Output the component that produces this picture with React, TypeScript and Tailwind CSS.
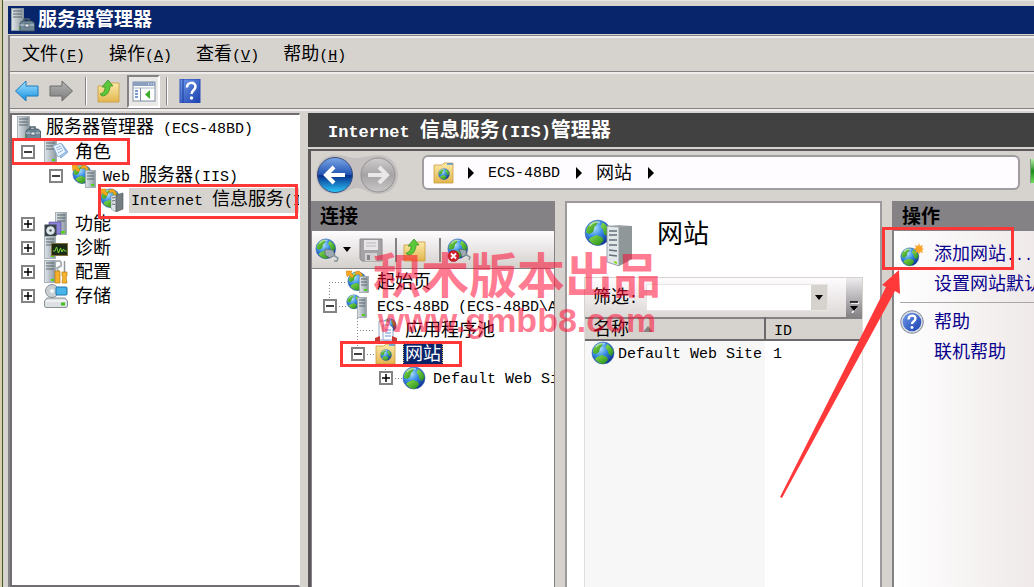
import React from 'react';

interface TextProps {
  children: string;
  latin?: string;
}

// Latin runs sit in a half-width mono face beside full-width Chinese glyphs
const MixedText: React.FC<TextProps> = ({ children, latin = 'text-[15px]' }) => (
  <>
    {children.split(/([\x20-\x7e]+)/).filter(Boolean).map((part, i) =>
      /^[\x20-\x7e]+$/.test(part) ? (
        <span key={i} className={`font-['Liberation_Mono',monospace] ${latin}`}>{part}</span>
      ) : (
        part
      )
    )}
  </>
);

const Defs = () => (
  <svg className="absolute h-0 w-0" aria-hidden="true">
    <defs>
      <radialGradient id="sea" cx="0.35" cy="0.3" r="0.75">
        <stop offset="0" stopColor="#b5e4ff" />
        <stop offset="0.45" stopColor="#3a8ee6" />
        <stop offset="1" stopColor="#0d2f8c" />
      </radialGradient>
      <linearGradient id="land" x1="0" y1="0" x2="1" y2="1">
        <stop offset="0" stopColor="#8fe04a" />
        <stop offset="1" stopColor="#1f8a1c" />
      </linearGradient>
      <linearGradient id="tower" x1="0" y1="0" x2="1" y2="0">
        <stop offset="0" stopColor="#dfe6ea" />
        <stop offset="1" stopColor="#8b979e" />
      </linearGradient>
      <linearGradient id="folder" x1="0" y1="0" x2="0" y2="1">
        <stop offset="0" stopColor="#fbeaa8" />
        <stop offset="1" stopColor="#e3b64f" />
      </linearGradient>
      <linearGradient id="blueArrow" x1="0" y1="0" x2="0" y2="1">
        <stop offset="0" stopColor="#a4e2ff" />
        <stop offset="1" stopColor="#1290e0" />
      </linearGradient>
      <linearGradient id="grayArrow" x1="0" y1="0" x2="0" y2="1">
        <stop offset="0" stopColor="#b4b4b4" />
        <stop offset="1" stopColor="#7c7c7c" />
      </linearGradient>
      <linearGradient id="navBlue" x1="0" y1="0" x2="0" y2="1">
        <stop offset="0" stopColor="#7ba6e6" />
        <stop offset="0.48" stopColor="#2456b4" />
        <stop offset="0.52" stopColor="#07308c" />
        <stop offset="1" stopColor="#2cc8fa" />
      </linearGradient>
      <linearGradient id="navGray" x1="0" y1="0" x2="0" y2="1">
        <stop offset="0" stopColor="#cfcdcd" />
        <stop offset="0.5" stopColor="#a5a3a4" />
        <stop offset="1" stopColor="#c9c6c6" />
      </linearGradient>
      <linearGradient id="helpBlue" x1="0" y1="0" x2="1" y2="1">
        <stop offset="0" stopColor="#6f9bea" />
        <stop offset="1" stopColor="#1a3fae" />
      </linearGradient>
    </defs>
  </svg>
);

const Globe = ({ x = 0, y = 0, s = 1 }: { x?: number; y?: number; s?: number }) => (
  <g transform={`translate(${x} ${y}) scale(${s})`}>
    <circle cx="12" cy="12" r="11" fill="url(#sea)" stroke="#3563b5" strokeWidth="0.6" />
    <path d="M3 7C6 3 9 1.500 12 2l-1 3-2 2-1 4-3 2-3-1c0-2 0-3 1-5Z" fill="url(#land)" />
    <path d="M6 16l5-2 5 2 1 3-4 4c-4 0-7-2-9-5Z" fill="url(#land)" />
    <path d="M16 3c4 2 6 5 6.500 8l-2 4-3-2-1-4-2-2Z" fill="url(#land)" />
    <path d="M5 6c2-3 6-4 9-3" fill="none" stroke="#fff" strokeOpacity="0.5" strokeWidth="1.500" />
  </g>
);

const Tower = ({ x = 0, y = 0, w = 12, h = 23 }: { x?: number; y?: number; w?: number; h?: number }) => (
  <g transform={`translate(${x} ${y})`}>
    <rect x="0.500" y="0.500" width={w - 1} height={h - 1} fill="url(#tower)" stroke="#98a5ac" strokeWidth="0.8" />
    <path d={`M2 3h${w - 4}M2 6h${w - 4}M2 9h${w - 4}`} stroke="#5b666d" strokeWidth="1" />
    <rect x={w - 5} y={h - 4} width="3" height="2" fill="#4fd414" />
  </g>
);

const OrangeArrows = () => (
  <path
    d="M0 1h6L5 3l3 3-2 2-3-3-2 2ZM9 2l4-1 3 3v5l-2-1V5l-2-1-2 1Z"
    fill="#f9a81e"
    stroke="#cf7d0c"
    strokeWidth="0.5"
  />
);

type IconName =
  | 'manager' | 'roles' | 'web' | 'iis' | 'features' | 'diagnostics' | 'config' | 'storage'
  | 'start' | 'host' | 'pools' | 'siteFolder' | 'globe' | 'connect' | 'disconnect' | 'addSite'
  | 'save' | 'folderUp' | 'help' | 'helpBook' | 'back' | 'forward' | 'console';

const FolderShape = () => (
  <path d="M2 4h8l2-2h9v20H2Z" fill="url(#folder)" stroke="#c99d3c" strokeWidth="0.8" />
);

const shapes: Record<IconName, React.ReactNode> = {
  manager: (
    <>
      <Tower w={13} />
      <path d="M13 13v-2h5v2" fill="none" stroke="#50616c" strokeWidth="1.5" />
      <path d="M9 15l2-2h10l2.500 2v8H9Z" fill="#6f8797" stroke="#3c4d59" strokeWidth="0.8" />
      <path d="M9 17h14" stroke="#c3d2db" />
      <rect x="14" y="16" width="4" height="3" fill="#dfe7ec" stroke="#3c4d59" strokeWidth="0.600" />
    </>
  ),
  roles: (
    <>
      <Tower w={13} />
      <path d="M10 8l8-4 6 8-7 6Z" fill="#a9c9ec" stroke="#6d9bd0" strokeWidth="0.8" />
      <path d="M9 6l8-3 5 9-8 5Z" fill="#eaf4ff" stroke="#7ea8d6" strokeWidth="0.8" />
      <path d="M12 8l5-2M13 10l5-2M14 13l5-3" stroke="#7ba2cf" strokeWidth="0.800" />
    </>
  ),
  web: (
    <>
      <Globe s={0.85} />
      <OrangeArrows />
      <Tower x={13} y={6} w={11} h={18} />
    </>
  ),
  iis: (
    <>
      <Globe s={0.85} />
      <OrangeArrows />
      <path d="M11 8l5-1v17l-5-3Z" fill="#dfe5e8" stroke="#7b868c" strokeWidth="0.500" />
      <path d="M16 7l7-2v16l-7 3Z" fill="#747d81" stroke="#4f5659" strokeWidth="0.600" />
      <path d="M12 10l3-0.500M12 13l3-0.500M12 16l3 0.500" stroke="#5f6a70" />
    </>
  ),
  features: (
    <>
      <Tower x={11} w={12} />
      <path d="M5 10h12v12H5Z" fill="#8c82d8" stroke="#5046a0" strokeWidth="0.600" />
      <rect x="0.500" y="12.500" width="12" height="11.500" fill="#39444a" />
      <circle cx="6.500" cy="18.500" r="4.300" fill="#dde5e8" />
      <circle cx="6.500" cy="18.500" r="1.200" fill="#49555b" />
      <rect x="17" y="19" width="3" height="2.500" fill="#4fd414" />
    </>
  ),
  diagnostics: (
    <>
      <Tower w={12} />
      <rect x="7.500" y="7.500" width="16" height="12" fill="#1d2a16" stroke="#83723e" />
      <path d="M9 15h2l1.500-4 2 6 2-5 1.500 4 1.500-3 1 2h2" fill="none" stroke="#7cd83a" />
    </>
  ),
  config: (
    <>
      <Tower w={12} />
      <path d="M11 2c5-3 7 0 6 4l-4 2 1 3" fill="none" stroke="#aab2b6" strokeWidth="2" />
      <path d="M11 11h5v12h-5Z" fill="#f6b02b" stroke="#b77a0c" strokeWidth="0.700" />
      <path d="M20.500 1v11" stroke="#8e979c" strokeWidth="1.500" />
      <path d="M18 12h5v4l-1 1 1 6h-5l1-6-1-1Z" fill="#f9b52e" stroke="#b77a0c" strokeWidth="0.700" />
    </>
  ),
  storage: (
    <>
      <circle cx="8" cy="7" r="6.500" fill="#c9d0d3" stroke="#889196" />
      <circle cx="8" cy="7" r="2" fill="#f5f7f8" />
      <rect x="12" y="3" width="11" height="8" rx="1" fill="#49b4e8" stroke="#1d75ae" />
      <path d="M3 14h18l2.500 3v5l-1 1.500h-21L0.500 22v-5Z" fill="#dce0e2" stroke="#7d868a" strokeWidth="0.900" />
      <path d="M2 17h20" stroke="#fff" />
      <rect x="17" y="18.500" width="4" height="3" fill="#3fc21a" />
    </>
  ),
  start: (
    <>
      <Globe x={1} y={1} s={0.85} />
      <OrangeArrows />
      <Tower x={13} y={6} w={10} h={17} />
    </>
  ),
  host: (
    <>
      <Globe s={0.65} />
      <Tower x={11} y={3} w={10} h={21} />
    </>
  ),
  pools: (
    <>
      <Globe x={8} s={0.62} />
      <path d="M5 3h8l3 3v16H5Z" fill="#fff" stroke="#7b8ebd" strokeWidth="0.800" />
      <path d="M9 7h7l3 3v12H9Z" fill="#fafcff" stroke="#7b8ebd" strokeWidth="0.800" />
      <path d="M11 12h6M11 15h6M11 18h6" stroke="#6b8cd1" />
      <path d="M1 20l5-2v5H1ZM18 18l5 2v3h-5Z" fill="#c73a36" />
    </>
  ),
  siteFolder: (
    <>
      <FolderShape />
      <path d="M15 3h6" stroke="#4a90d9" strokeWidth="1.500" />
      <Globe x={6} y={7} s={0.5} />
    </>
  ),
  globe: <Globe />,
  connect: (
    <>
      <Globe s={0.9} />
      <path d="M10 11l8 1 2 5-5 3-5-3Z" fill="#9caab1" stroke="#55636b" strokeWidth="0.700" />
      <path d="M18 17l5 3-1 3h-3" fill="none" stroke="#84949c" strokeWidth="1.500" />
    </>
  ),
  disconnect: (
    <>
      <Globe s={0.9} />
      <path d="M12 11l7 1 1 5-5 2Z" fill="#9caab1" stroke="#55636b" strokeWidth="0.700" />
      <path d="M18 16l5 3-1 3" fill="none" stroke="#84949c" strokeWidth="1.500" />
      <circle cx="6.500" cy="18" r="5.500" fill="#d4202e" stroke="#8d0c17" strokeWidth="0.600" />
      <path d="M4 15.500l5 5M9 15.500l-5 5" stroke="#fff" strokeWidth="1.800" />
    </>
  ),
  addSite: (
    <>
      <Globe y={4} s={0.82} />
      <path d="M19 0l1 3 3-1-1 3 2 1-2 1 1 3-3-1-1 3-1-3-3 1 1-3-3-1 3-1-1-3 3 1Z" fill="#fba62a" />
    </>
  ),
  save: (
    <>
      <path d="M1 1h22v22H3l-2-2Z" fill="#a5a3a6" stroke="#8b898c" />
      <rect x="5" y="2" width="14" height="10" fill="#e8e5e8" />
      <path d="M7 5h10M7 8h10" stroke="#bab8bb" />
      <rect x="6" y="15" width="12" height="8" fill="#d2cfd2" />
      <rect x="8" y="17" width="3" height="5" fill="#87858a" />
    </>
  ),
  folderUp: (
    <>
      <path d="M1 7h10l2-3h9v19H1Z" fill="url(#folder)" stroke="#c99d3c" strokeWidth="0.800" />
      <path d="M3 15c3 0 5-3 5-7H5l6-7 5 6h-3c0 5-3 10-8 10Z" fill="#5cc93c" stroke="#2c8a1b" strokeWidth="0.700" />
    </>
  ),
  help: (
    <>
      <circle cx="12" cy="12" r="11.300" fill="#dcdfe5" stroke="#7e879a" />
      <circle cx="12" cy="12" r="9.300" fill="url(#helpBlue)" />
      <path d="M8.500 9.500c0-5 7-5 7-1 0 3-3.500 2.500-3.500 5.500" fill="none" stroke="#fff" strokeWidth="2.300" />
      <circle cx="12" cy="17.500" r="1.400" fill="#fff" />
    </>
  ),
  helpBook: (
    <>
      <rect x="2" width="20" height="24" fill="url(#helpBlue)" stroke="#2b4fb5" />
      <path d="M5 0v24" stroke="#163a9e" />
      <path d="M9 8.500c0-6 8.500-6 8.500-1 0 4-4 3.500-4 7.500" fill="none" stroke="#fff" strokeWidth="2.500" />
      <circle cx="13.500" cy="19" r="1.700" fill="#fff" />
    </>
  ),
  back: <path d="M0.500 12L11 2v5h12v10H11v5Z" fill="url(#blueArrow)" stroke="#1f7bbd" />,
  forward: <path d="M23.500 12L13 2v5H1v10h12v5Z" fill="url(#grayArrow)" stroke="#6c6c6c" />,
  console: (
    <>
      <rect x="1" y="3" width="22" height="19" fill="#fff" stroke="#7f8fa6" />
      <rect x="1" y="3" width="22" height="4" fill="#8ba0bf" />
      <path d="M16 5h1M18.500 5h1M21 5h1" stroke="#fff" />
      <path d="M1 9h22" stroke="#aab6c8" />
      <path d="M8.500 9v13" stroke="#7f8fa6" />
      <path d="M3 12h3M3 15h3M3 18h3" stroke="#4c7cc4" strokeWidth="1.500" />
      <path d="M18 11v9l-5-4.500Z" fill="#3aae2a" />
    </>
  ),
};

const Icon: React.FC<{ name: IconName; className?: string }> = ({ name, className = 'size-6' }) => (
  <svg viewBox="0 0 24 24" className={`shrink-0 ${className}`} aria-hidden="true">
    {shapes[name]}
  </svg>
);

interface TreeItem {
  label: string;
  icon: IconName;
  level: number;
  state?: 'open' | 'closed';
  highlight?: 'gray' | 'navy';
  mark?: string;
}

const serverTree: TreeItem[] = [
  { label: '角色', icon: 'roles', level: 0, state: 'open', mark: '-left-px -top-0.5 h-[27px] w-[119px]' },
  { label: 'Web 服务器(IIS)', icon: 'web', level: 1, state: 'open' },
  { label: 'Internet 信息服务(IIS)管理器', icon: 'iis', level: 2, highlight: 'gray', mark: 'left-[86px] -top-1 h-[35px] w-[200px]' },
  { label: '功能', icon: 'features', level: 0, state: 'closed' },
  { label: '诊断', icon: 'diagnostics', level: 0, state: 'closed' },
  { label: '配置', icon: 'config', level: 0, state: 'closed' },
  { label: '存储', icon: 'storage', level: 0, state: 'closed' },
];

const connectionTree: TreeItem[] = [
  { label: '起始页', icon: 'start', level: 0 },
  { label: 'ECS-48BD (ECS-48BD\\Administrator)', icon: 'host', level: 0, state: 'open' },
  { label: '应用程序池', icon: 'pools', level: 1 },
  { label: '网站', icon: 'siteFolder', level: 1, state: 'open', highlight: 'navy', mark: 'left-[26px] -top-px h-[26px] w-[122px]' },
  { label: 'Default Web Site', icon: 'globe', level: 2, state: 'closed' },
];

const indents = ['pl-[9px]', 'pl-[37px]', 'pl-[65px]'];

const TreeRow: React.FC<{ item: TreeItem }> = ({ item }) => {
  const highlight =
    item.highlight === 'gray'
      ? 'bg-[#d6d3ce] grow'
      : item.highlight === 'navy'
        ? 'bg-[#0a246a] text-white outline outline-dotted outline-[#e0b860] -outline-offset-1'
        : '';

  return (
    <li className={`relative flex h-6 items-center ${indents[item.level]}`}>
      {item.state ? (
        <button
          type="button"
          aria-label={`${item.state === 'open' ? '折叠' : '展开'} ${item.label}`}
          className="flex size-3.5 shrink-0 items-center justify-center border-2 border-[#848284] bg-white"
        >
          <svg viewBox="0 0 10 10" className="size-2.5 shrink-0">
            <path d={item.state === 'open' ? 'M1 5h8' : 'M1 5h8M5 1v8'} stroke="#000" strokeWidth="1.500" />
          </svg>
        </button>
      ) : (
        <span className="w-3.5 shrink-0" />
      )}
      <Icon name={item.icon} className="ml-[9px] mr-[5px] size-6" />
      <span className={`px-0.5 text-lg leading-[22px] whitespace-pre ${highlight}`}>
        <MixedText>{item.label}</MixedText>
      </span>
      {item.mark && <span className={`pointer-events-none absolute z-10 border-3 border-[#ff3737] ${item.mark}`} />}
    </li>
  );
};

const menus = [
  { label: '文件', key: 'F' },
  { label: '操作', key: 'A' },
  { label: '查看', key: 'V' },
  { label: '帮助', key: 'H' },
];

const Separator = () => <span className="h-7 w-0.5 border-r border-white bg-[#848284]" />;

const ServerTree = () => (
  <aside className="w-[290px] shrink-0 overflow-hidden border-2 border-r border-[#6f6d70] border-r-white bg-white pt-px">
    <div className="flex h-6 items-center pl-[5px]">
      <Icon name="manager" />
      <span className="ml-[5px] text-lg leading-6 whitespace-pre">
        <MixedText>{'服务器管理器 (ECS-48BD)'}</MixedText>
      </span>
    </div>
    <ul>
      {serverTree.map((item) => <TreeRow key={item.label} item={item} />)}
    </ul>
  </aside>
);

const AddressBar = () => (
  <div className="flex h-[50px] shrink-0 items-start pl-[5px] pt-1">
    <div className="relative h-10 w-[84px] shrink-0">
      <svg viewBox="0 0 84 40" className="h-10 w-[84px]" aria-hidden="true">
        <path d="M19 0c10 0 13 3 21 3S54 0 62 0c12 0 20 9 20 20s-8 19-20 19c-9 0-12-5-21-6-9 1-13 6-22 6C8 39 0 31 0 20S8 0 19 0Z" fill="#c4c0c0" />
        <circle cx="19" cy="20" r="17.500" fill="url(#navBlue)" stroke="#3a4d80" />
        <circle cx="62" cy="20" r="17" fill="url(#navGray)" stroke="#929091" />
        <path d="M29 20H11M18 12l-8 8 8 8" fill="none" stroke="#fff" strokeWidth="4" />
        <path d="M52 20h18M63 12l8 8-8 8" fill="none" stroke="#e9e7e7" strokeWidth="4" />
      </svg>
      <button type="button" aria-label="后退" className="absolute inset-y-0 left-0 w-10" />
      <button type="button" aria-label="前进" className="absolute inset-y-0 right-0 w-10" />
    </div>
    <nav className="ml-[22px] flex h-[35px] grow items-center rounded-md border-2 border-[#a09da0] bg-[#fffcff] pl-2 text-lg leading-6">
      <Icon name="siteFolder" />
      <svg viewBox="0 0 6 12" className="ml-3 h-3 w-1.5"><path d="M0 0l6 6-6 6Z" /></svg>
      <a href="#host" className="ml-3.5"><MixedText>ECS-48BD</MixedText></a>
      <svg viewBox="0 0 6 12" className="ml-4 h-3 w-1.5"><path d="M0 0l6 6-6 6Z" /></svg>
      <a href="#sites" className="ml-3.5">网站</a>
      <svg viewBox="0 0 6 12" className="ml-4 h-3 w-1.5"><path d="M0 0l6 6-6 6Z" /></svg>
    </nav>
    <button
      type="button"
      aria-label="刷新"
      className="ml-2.5 mt-1 h-6 w-1 shrink-0 border-l border-[#7d9c7d] bg-linear-to-b from-[#b5f0a8] via-[#158a1b] to-[#6fe05a]"
    />
  </div>
);

const Connections = () => (
  <section className="flex w-[244px] shrink-0 flex-col overflow-hidden border-x border-[#848284] bg-white">
    <h2 className="h-[30px] shrink-0 bg-[#848284] pl-2 pt-px text-[19px] leading-[30px] font-bold">连接</h2>
    <div className="flex h-[38px] shrink-0 items-center border-b border-[#848284] bg-linear-to-b from-[#fffcff] to-[#d4d0cc] pl-[3px]">
      <button type="button" aria-label="连接" className="flex items-center gap-1">
        <Icon name="connect" />
        <svg viewBox="0 0 8 5" className="h-[5px] w-2"><path d="M0 0h8L4 5Z" /></svg>
      </button>
      <button type="button" aria-label="保存" className="ml-2 mr-3"><Icon name="save" /></button>
      <span className="h-6 w-0.5 bg-[#848284]" />
      <button type="button" aria-label="上移" className="ml-1.5 mr-3"><Icon name="folderUp" /></button>
      <span className="h-6 w-0.5 bg-[#848284]" />
      <button type="button" aria-label="断开" className="ml-1.5"><Icon name="disconnect" /></button>
    </div>
    <div className="relative pt-px">
      <svg viewBox="0 0 110 120" className="absolute left-0 top-px h-[120px] w-[110px]" aria-hidden="true">
        <path
          d="M17 12.500h18M17.500 12v24M24 36.500h12M45.500 48v36M45 60.500h18M52 84.500h12M73.500 96v12M80 108.500h12"
          fill="none"
          stroke="#848284"
          strokeDasharray="1 2"
        />
      </svg>
      <ul className="pl-0.5">
        {connectionTree.map((item) => <TreeRow key={item.label} item={item} />)}
      </ul>
    </div>
  </section>
);

const SiteList = () => (
  <section className="flex min-w-0 grow flex-col border-2 border-b-0 border-[#9b999c] bg-white px-[17px]">
    <div className="flex h-[74px] shrink-0 items-start pt-4">
      <svg viewBox="0 0 48 48" className="size-12 shrink-0" aria-hidden="true">
        <Globe s={1.15} />
        <path d="M23 7l12-1 13 1v33l-13 7-12-4Z" fill="#a3abae" />
        <path d="M23 7l12 1v39l-12-4Z" fill="#e2e7ea" stroke="#87929a" strokeWidth="0.800" />
        <path d="M35 8l13-1v33l-13 7Z" fill="#8f9799" />
        <path d="M25 12h8M25 16h8M25 21h8M25 26h8M25 31l8 1M25 36l8 1" stroke="#647079" strokeWidth="1.500" />
        <path d="M30 42l3 1v2l-3-1Z" fill="#7ae015" />
      </svg>
      <h2 className="ml-[25px] text-[26px] leading-[30px]">网站</h2>
    </div>
    <div className="flex h-10 shrink-0 items-center border border-b-0 border-[#d6d3ce] bg-linear-to-b from-[#fffcff] to-[#dcd8d6] pl-2 text-lg">
      <label htmlFor="filter" className="w-[53px] shrink-0"><MixedText>筛选:</MixedText></label>
      <div className="flex h-[27px] min-w-0 grow border border-[#e8e5e2] bg-white">
        <input id="filter" type="text" className="min-w-0 grow bg-white px-1 text-base outline-none" />
        <button type="button" aria-label="筛选选项" className="flex w-4 shrink-0 items-center justify-center bg-[#d6d3ce]">
          <svg viewBox="0 0 8 5" className="h-[5px] w-2"><path d="M0 0h8L4 5Z" /></svg>
        </button>
      </div>
      <button
        type="button"
        aria-label="更多"
        className="ml-[18px] flex h-full w-4 shrink-0 items-end justify-center bg-linear-to-b from-[#efecef] to-[#848284] pb-1"
      >
        <svg viewBox="0 0 10 12" className="h-3 w-2.5">
          <path d="M2 2h8M3 12l4-5" stroke="#fff" strokeWidth="1.500" />
          <path d="M1 1h8" stroke="#000" strokeWidth="1.500" />
          <path d="M1 5h8L5 10Z" />
        </svg>
      </button>
    </div>
    <div className="grow border-x border-[#e2deda] bg-linear-to-r from-[#f7f7f7] from-[180px] to-white to-[180px]">
      <table className="w-full table-fixed border-collapse text-left text-lg leading-5">
        <thead>
          <tr className="border-y-2 border-t-[#848284] border-b-[#6b696c] bg-[#d6d3ce]">
            <th className="w-[180px] border-r-2 border-[#6b696c] p-0 pl-2 font-normal">
              <span className="flex h-5 items-center gap-3.5">
                名称
                <svg viewBox="0 0 10 6" className="h-1.5 w-2.5"><path d="M0 6h10L5 0Z" fill="#848284" /></svg>
              </span>
            </th>
            <th className="p-0 pl-2 font-normal">
              <span className="block h-5"><MixedText>ID</MixedText></span>
            </th>
          </tr>
        </thead>
        <tbody>
          <tr>
            <td className="p-0 pl-1.5">
              <span className="flex h-6 items-center gap-[3px] whitespace-nowrap">
                <Icon name="globe" />
                <span><MixedText>Default Web Site</MixedText></span>
              </span>
            </td>
            <td className="p-0 pl-2"><MixedText>1</MixedText></td>
          </tr>
        </tbody>
      </table>
    </div>
  </section>
);

const Actions = () => (
  <section className="relative w-[142px] shrink-0 border-l-2 border-[#848284] bg-linear-to-r from-white to-[#efe9e9] text-lg text-[#08008c]">
    <h2 className="h-[30px] bg-[#848284] pl-2 pt-px text-[19px] leading-[30px] font-bold text-black">操作</h2>
    <div className="overflow-hidden whitespace-nowrap">
      <a href="#add" className="mt-[9px] flex h-[29px] items-center pl-1.5">
        <Icon name="addSite" className="mr-2.5 size-6" />
        <span><MixedText>添加网站...</MixedText></span>
      </a>
      <a href="#defaults" className="flex h-[30px] items-center pl-10">
        <span><MixedText>设置网站默认值...</MixedText></span>
      </a>
      <hr className="mt-[3px] ml-1.5 border-[#aaa7aa]" />
      <a href="#help" className="mt-1 flex h-[30px] items-center pl-1.5">
        <Icon name="help" className="mr-2.5 size-6" />
        帮助
      </a>
      <a href="#online" className="flex h-[30px] items-center pl-10">联机帮助</a>
    </div>
    <span className="pointer-events-none absolute -left-3 top-[26px] h-[43px] w-[132px] border-3 border-[#ff3737]" />
    <svg viewBox="0 0 130 240" className="pointer-events-none absolute -left-[120px] top-[66px] z-10 h-[240px] w-[130px]" aria-hidden="true">
      <path d="M6 230L112 20L108 18L125 3L126 27L121 24L8 231Z" fill="#ff3939" />
    </svg>
  </section>
);

const Watermark = () => (
  <div className="pointer-events-none absolute left-[62px] top-[50px] z-20 text-center font-bold whitespace-nowrap text-[#ff0a32]/55">
    <p className="text-[48px] leading-[52px]">积木版本出品</p>
    <p className="text-[34px] leading-[34px]">www.gmbb8.com</p>
  </div>
);

const App: React.FC = () => (
  <div className="flex h-screen overflow-hidden bg-[#d6d3ce] font-['Liberation_Sans','Noto_Sans_CJK_SC',sans-serif] text-black">
    <Defs />
    <div className="w-[3px] shrink-0 border-r border-[#3e5a22] bg-[#d9cfae]" />
    <div className="flex min-w-0 grow flex-col border-t border-[#e8e6e2] pl-[5px] pt-[5px]">
      <header className="flex h-7 shrink-0 items-center bg-[#08246b] pl-[3px]">
        <Icon name="manager" />
        <h1 className="ml-[3px] text-[19px] leading-7 font-bold text-white">服务器管理器</h1>
      </header>
      <div className="mt-px flex min-h-0 grow flex-col border-l-2 border-t border-[#848284]">
        <nav className="flex h-9 shrink-0 items-center gap-6 border-t-2 border-b border-t-[#efedec] border-b-[#848284] pl-3 pt-0.5 text-lg">
          {menus.map((menu) => (
            <button key={menu.key} type="button" className="leading-6">
              {menu.label}
              <span className="font-['Liberation_Mono',monospace] text-[15px]">
                (<u>{menu.key}</u>)
              </span>
            </button>
          ))}
        </nav>
        <div className="flex h-[37px] shrink-0 items-center border-t-2 border-b border-t-[#efedec] border-b-[#848284] pl-[5px]">
          <button type="button" aria-label="后退"><Icon name="back" /></button>
          <button type="button" aria-label="前进" className="ml-2.5 mr-3"><Icon name="forward" /></button>
          <Separator />
          <button type="button" aria-label="上移一级" className="ml-2.5 mr-1.5"><Icon name="folderUp" /></button>
          <button type="button" aria-label="显示控制台树" className="mr-1.5 flex size-[33px] items-center justify-center border-2 border-[#848284] border-r-white border-b-white bg-[#ebe9e7]">
            <Icon name="console" />
          </button>
          <Separator />
          <button type="button" aria-label="帮助" className="ml-2.5"><Icon name="helpBook" /></button>
        </div>
        <div className="flex min-h-0 grow gap-2 border-t-2 border-[#efedec] pt-0.5">
          <ServerTree />
          <main className="flex min-w-0 grow flex-col">
            <h2 className="mb-0.5 h-[34px] shrink-0 bg-[#424142] pl-5 text-xl leading-[34px] font-bold whitespace-pre text-white">
              <MixedText latin="text-[17px]">Internet 信息服务(IIS)管理器</MixedText>
            </h2>
            <div className="flex min-h-0 grow flex-col border-t-2 border-l-3 border-[#5a585b]">
              <AddressBar />
              <div className="relative flex min-h-0 grow gap-2.5">
                <Connections />
                <SiteList />
                <Actions />
                <Watermark />
              </div>
            </div>
          </main>
        </div>
      </div>
    </div>
  </div>
);

export default App;
